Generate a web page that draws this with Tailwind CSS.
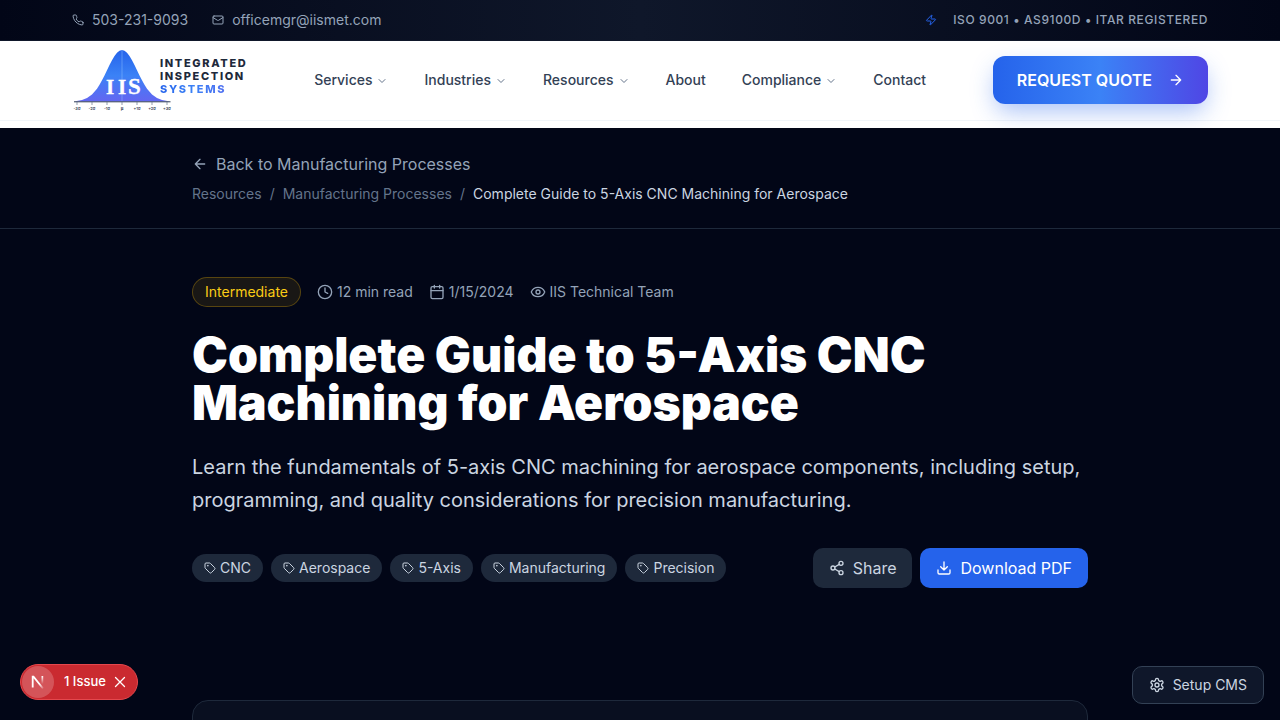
<!DOCTYPE html>
<html lang="en">
<head>
<meta charset="utf-8">
<meta name="viewport" content="width=device-width, initial-scale=1">
<title>Complete Guide to 5-Axis CNC Machining for Aerospace</title>
<script src="https://cdn.jsdelivr.net/npm/@tailwindcss/browser@4"></script>
</head>
<body class="h-screen overflow-hidden bg-white font-['Inter',sans-serif] antialiased">
<svg class="hidden" aria-hidden="true">
  <defs>
    <symbol id="chevron" viewBox="0 0 24 24"><path d="m6 9 6 6 6-6"/></symbol>
    <symbol id="tag" viewBox="0 0 24 24"><path d="M12.586 2.586A2 2 0 0 0 11.172 2H4a2 2 0 0 0-2 2v7.172a2 2 0 0 0 .586 1.414l8.704 8.704a2.426 2.426 0 0 0 3.420 0l6.580-6.580a2.426 2.426 0 0 0 0-3.420z"/><circle cx="7.5" cy="7.5" r=".5" fill="currentColor"/></symbol>
  </defs>
</svg>

<header class="relative z-10">
  <div class="border-b border-[#0f172a] bg-[linear-gradient(to_right,#020617,#0f172a,#020617)]">
    <div class="mx-auto flex h-10 items-center justify-between px-18">
      <div class="flex items-center gap-6 text-sm text-[#94a3b8]">
        <a href="tel:5032319093" class="flex items-center gap-2">
          <svg class="size-3" viewBox="0 0 24 24" fill="none" stroke="currentColor" stroke-width="2" stroke-linecap="round" stroke-linejoin="round"><path d="M22 16.92v3a2 2 0 0 1-2.18 2 19.79 19.79 0 0 1-8.63-3.07 19.5 19.5 0 0 1-6-6 19.79 19.79 0 0 1-3.07-8.67A2 2 0 0 1 4.11 2h3a2 2 0 0 1 2 1.72 12.84 12.84 0 0 0 .7 2.81 2 2 0 0 1-.45 2.11L8.09 9.91a16 16 0 0 0 6 6l1.27-1.27a2 2 0 0 1 2.11-.45 12.84 12.84 0 0 0 2.81.7A2 2 0 0 1 22 16.92z"/></svg>
          503-231-9093
        </a>
        <a href="mailto:officemgr@iismet.com" class="flex items-center gap-2">
          <svg class="size-3" viewBox="0 0 24 24" fill="none" stroke="currentColor" stroke-width="2" stroke-linecap="round" stroke-linejoin="round"><rect width="20" height="16" x="2" y="4" rx="2"/><path d="m22 7-8.97 5.7a1.94 1.94 0 0 1-2.06 0L2 7"/></svg>
          officemgr@iismet.com
        </a>
      </div>
      <div class="flex items-center gap-4 text-xs font-medium tracking-wider text-[#94a3b8]">
        <svg class="size-3 text-[#2563eb]" viewBox="0 0 24 24" fill="none" stroke="currentColor" stroke-width="2" stroke-linecap="round" stroke-linejoin="round"><path d="M4 14a1 1 0 0 1-.78-1.63l9.9-10.2a.5.5 0 0 1 .86.46l-1.92 6.02A1 1 0 0 0 13 10h7a1 1 0 0 1 .78 1.63l-9.9 10.2a.5.5 0 0 1-.86-.46l1.92-6.02A1 1 0 0 0 11 14z"/></svg>
        <span>ISO 9001 • AS9100D • ITAR REGISTERED</span>
      </div>
    </div>
  </div>

  <div class="border-b border-[#f1f5f9] bg-white">
    <div class="flex h-[79px] items-center justify-between px-18 pb-px">
      <a href="#" class="flex items-center" aria-label="Integrated Inspection Systems">
        <svg class="h-16 w-[100px]" viewBox="0 0 100 64">
          <defs>
            <linearGradient id="bell" x1="0" y1="0" x2="0" y2="1"><stop offset="0" stop-color="#2563eb"/><stop offset=".5" stop-color="#3b82f6"/><stop offset="1" stop-color="#6366f1"/></linearGradient>
          </defs>
          <path fill="url(#bell)" d="M2 53.500L10 52L15 50.100L20 46.500L25 40.700L27.500 36.800L30 32.300L32.500 27.400L35 22.300L37.500 17.100L40 12.300L42.500 8.100L45 4.800Q47.500 2 50 2Q52.500 2 55 4.800L57.500 8.100L60 12.300L62.500 17.100L65 22.300L67.500 27.400L70 32.300L72.500 36.800L75 40.700L80 46.500L85 50.100L90 52L98 53.500Z"/>
          <path d="M50 2V53" stroke="#93c5fd" stroke-opacity=".45" stroke-width="1"/>
          <path d="M2 53.800H98.500" stroke="#334155" stroke-width="1"/>
          <path d="M5 54v3M20 54v3M35 54v3M50 54v3M65 54v3M80 54v3M95 54v3" stroke="#64748b" stroke-width=".7"/>
          <g font-family="Liberation Serif, serif" font-weight="700" font-size="21" fill="#fff" stroke="#fff" stroke-width=".3"><text x="34" y="46">I</text><text x="46" y="46">I</text><text x="56" y="46" font-size="23">S</text></g>
          <g font-family="Inter, sans-serif" font-weight="600" font-size="4" fill="#334155" text-anchor="middle"><text x="5" y="62">-3σ</text><text x="20" y="62">-2σ</text><text x="35" y="62">-1σ</text><text x="50" y="62" font-weight="800">μ</text><text x="65" y="62">+1σ</text><text x="80" y="62">+2σ</text><text x="95" y="62">+3σ</text></g>
        </svg>
        <span class="-ml-3 flex flex-col items-start pb-2 text-[11px]/[13px] font-extrabold tracking-[0.15em] text-[#1e293b]">
          <span>INTEGRATED</span><span>INSPECTION</span><span class="bg-[linear-gradient(to_right,#2563eb,#3b82f6,#4f6ef0)] bg-clip-text text-transparent">SYSTEMS</span>
        </span>
      </a>
      <nav class="flex items-center gap-9 text-sm font-medium text-[#334155]">
        <a href="#" class="flex items-center gap-1">Services<svg class="mt-px size-3 text-[#64748b]" fill="none" stroke="currentColor" stroke-width="2" stroke-linecap="round" stroke-linejoin="round"><use href="#chevron"/></svg></a>
        <a href="#" class="flex items-center gap-1">Industries<svg class="mt-px size-3 text-[#64748b]" fill="none" stroke="currentColor" stroke-width="2" stroke-linecap="round" stroke-linejoin="round"><use href="#chevron"/></svg></a>
        <a href="#" class="flex items-center gap-1">Resources<svg class="mt-px size-3 text-[#64748b]" fill="none" stroke="currentColor" stroke-width="2" stroke-linecap="round" stroke-linejoin="round"><use href="#chevron"/></svg></a>
        <a href="#">About</a>
        <a href="#" class="flex items-center gap-1">Compliance<svg class="mt-px size-3 text-[#64748b]" fill="none" stroke="currentColor" stroke-width="2" stroke-linecap="round" stroke-linejoin="round"><use href="#chevron"/></svg></a>
        <a href="#">Contact</a>
      </nav>
      <a href="#" class="flex h-12 items-center gap-4 rounded-xl bg-[linear-gradient(to_right,#2563eb,#3b82f6,#4f46e5)] px-6 font-semibold text-white shadow-[0_10px_25px_-3px_rgba(37,99,235,0.4)]">
        REQUEST QUOTE
        <svg class="size-4" viewBox="0 0 24 24" fill="none" stroke="currentColor" stroke-width="2" stroke-linecap="round" stroke-linejoin="round"><path d="M5 12h14M12 5l7 7-7 7"/></svg>
      </a>
    </div>
  </div>
</header>

<main class="relative z-20 mt-[7px] bg-[#020617] text-[#94a3b8]">
  <div class="border-b border-[#1e293b] py-6">
    <div class="mx-auto max-w-4xl">
      <a href="#" class="flex items-center gap-2">
        <svg class="size-4" viewBox="0 0 24 24" fill="none" stroke="currentColor" stroke-width="2" stroke-linecap="round" stroke-linejoin="round"><path d="m12 19-7-7 7-7M19 12H5"/></svg>
        Back to Manufacturing Processes
      </a>
      <nav class="mt-2 flex gap-2 text-sm text-[#64748b]" aria-label="Breadcrumb">
        <a href="#">Resources</a><span>/</span><a href="#">Manufacturing Processes</a><span>/</span><span class="text-[#cbd5e1]">Complete Guide to 5-Axis CNC Machining for Aerospace</span>
      </nav>
    </div>
  </div>

  <section class="mx-auto max-w-4xl py-12">
    <div class="flex items-center gap-4 text-sm">
      <span class="rounded-full border border-[#eab308]/30 bg-[#eab308]/10 px-3 py-1 text-[#facc15]">Intermediate</span>
      <span class="flex items-center gap-1"><svg class="size-4" viewBox="0 0 24 24" fill="none" stroke="currentColor" stroke-width="2" stroke-linecap="round" stroke-linejoin="round"><circle cx="12" cy="12" r="10"/><path d="M12 6v6l4 2"/></svg>12 min read</span>
      <span class="flex items-center gap-1"><svg class="size-4" viewBox="0 0 24 24" fill="none" stroke="currentColor" stroke-width="2" stroke-linecap="round" stroke-linejoin="round"><path d="M8 2v4M16 2v4M3 10h18"/><rect width="18" height="18" x="3" y="4" rx="2"/></svg>1/15/2024</span>
      <span class="flex items-center gap-1"><svg class="size-4" viewBox="0 0 24 24" fill="none" stroke="currentColor" stroke-width="2" stroke-linecap="round" stroke-linejoin="round"><path d="M2.062 12.348a1 1 0 0 1 0-.696 10.750 10.750 0 0 1 19.876 0 1 1 0 0 1 0 .696 10.750 10.750 0 0 1-19.876 0"/><circle cx="12" cy="12" r="3"/></svg>IIS Technical Team</span>
    </div>
    <h1 class="mt-6 text-5xl font-black text-white">Complete Guide to 5-Axis CNC Machining for Aerospace</h1>
    <p class="mt-6 text-xl leading-relaxed text-[#cbd5e1]">Learn the fundamentals of 5-axis CNC machining for aerospace components, including setup, programming, and quality considerations for precision manufacturing.</p>
    <div class="mt-8 flex items-center justify-between text-[#cbd5e1]">
      <ul class="flex gap-2 text-sm">
        <li class="flex items-center gap-1 rounded-full bg-[#1e293b] px-3 py-1"><svg class="size-3" fill="none" stroke="currentColor" stroke-width="2" stroke-linecap="round" stroke-linejoin="round"><use href="#tag"/></svg>CNC</li>
        <li class="flex items-center gap-1 rounded-full bg-[#1e293b] px-3 py-1"><svg class="size-3" fill="none" stroke="currentColor" stroke-width="2" stroke-linecap="round" stroke-linejoin="round"><use href="#tag"/></svg>Aerospace</li>
        <li class="flex items-center gap-1 rounded-full bg-[#1e293b] px-3 py-1"><svg class="size-3" fill="none" stroke="currentColor" stroke-width="2" stroke-linecap="round" stroke-linejoin="round"><use href="#tag"/></svg>5-Axis</li>
        <li class="flex items-center gap-1 rounded-full bg-[#1e293b] px-3 py-1"><svg class="size-3" fill="none" stroke="currentColor" stroke-width="2" stroke-linecap="round" stroke-linejoin="round"><use href="#tag"/></svg>Manufacturing</li>
        <li class="flex items-center gap-1 rounded-full bg-[#1e293b] px-3 py-1"><svg class="size-3" fill="none" stroke="currentColor" stroke-width="2" stroke-linecap="round" stroke-linejoin="round"><use href="#tag"/></svg>Precision</li>
      </ul>
      <div class="flex gap-2">
        <button type="button" class="flex items-center gap-2 rounded-[10px] bg-[#1e293b] px-4 py-2"><svg class="size-4" viewBox="0 0 24 24" fill="none" stroke="currentColor" stroke-width="2" stroke-linecap="round" stroke-linejoin="round"><circle cx="18" cy="5" r="3"/><circle cx="6" cy="12" r="3"/><circle cx="18" cy="19" r="3"/><path d="m8.590 13.510 6.830 3.980M15.410 6.510l-6.820 3.980"/></svg>Share</button>
        <button type="button" class="flex items-center gap-2 rounded-[10px] bg-[#2563eb] px-4 py-2 text-white"><svg class="size-4" viewBox="0 0 24 24" fill="none" stroke="currentColor" stroke-width="2" stroke-linecap="round" stroke-linejoin="round"><path d="M21 15v4a2 2 0 0 1-2 2H5a2 2 0 0 1-2-2v-4M7 10l5 5 5-5M12 15V3"/></svg>Download PDF</button>
      </div>
    </div>
  </section>

  <section class="mx-auto max-w-4xl py-16">
    <div class="h-96 rounded-2xl border border-[#1e293b] bg-[#0f172a]/50"></div>
  </section>
</main>

<div class="fixed bottom-5 left-5 z-30 flex h-9 items-center rounded-full border border-[#e5484d] bg-[#ca2a30] pr-[11px] pl-px text-[13px] font-medium text-white">
  <span class="flex size-8 items-center justify-center rounded-full bg-white/20">
    <svg class="size-4" viewBox="0 0 16 16" fill="none"><defs><linearGradient id="stem" x1="0" y1="0" x2="0" y2="1"><stop offset="0" stop-color="#fff"/><stop offset="1" stop-color="#fff" stop-opacity="0"/></linearGradient><linearGradient id="slash" x1="3" y1="2" x2="14" y2="15" gradientUnits="userSpaceOnUse"><stop offset=".6" stop-color="#fff"/><stop offset="1" stop-color="#fff" stop-opacity="0"/></linearGradient></defs><path d="M2.700 13.500V2.700H3.500L13 14.500" stroke="url(#slash)" stroke-width="1.800"/><rect x="11.500" y="2" width="1.700" height="8" fill="url(#stem)"/></svg>
  </span>
  <button type="button" class="ml-[10px]">1 Issue</button>
  <button type="button" class="ml-2" aria-label="Close"><svg class="size-3" viewBox="0 0 12 12" fill="none" stroke="currentColor" stroke-width="1.300" stroke-linecap="round"><path d="m1.500 1.500 9 9M10.500 1.500l-9 9"/></svg></button>
</div>

<button type="button" class="fixed right-4 bottom-4 z-30 flex items-center gap-2 rounded-[10px] border border-[#334155] bg-[#0f172a] px-4 py-2 text-sm text-[#cbd5e1]">
  <svg class="size-4" viewBox="0 0 24 24" fill="none" stroke="currentColor" stroke-width="2" stroke-linecap="round" stroke-linejoin="round"><path d="M12.220 2h-.440a2 2 0 0 0-2 2v.180a2 2 0 0 1-1 1.730l-.430.250a2 2 0 0 1-2 0l-.150-.080a2 2 0 0 0-2.730.730l-.220.380a2 2 0 0 0 .730 2.730l.150.100a2 2 0 0 1 1 1.720v.510a2 2 0 0 1-1 1.740l-.150.090a2 2 0 0 0-.730 2.730l.220.380a2 2 0 0 0 2.730.730l.150-.080a2 2 0 0 1 2 0l.430.250a2 2 0 0 1 1 1.730V20a2 2 0 0 0 2 2h.440a2 2 0 0 0 2-2v-.180a2 2 0 0 1 1-1.730l.430-.250a2 2 0 0 1 2 0l.150.080a2 2 0 0 0 2.730-.730l.220-.390a2 2 0 0 0-.730-2.730l-.150-.080a2 2 0 0 1-1-1.740v-.500a2 2 0 0 1 1-1.740l.150-.090a2 2 0 0 0 .730-2.730l-.220-.380a2 2 0 0 0-2.730-.730l-.150.080a2 2 0 0 1-2 0l-.430-.250a2 2 0 0 1-1-1.730V4a2 2 0 0 0-2-2z"/><circle cx="12" cy="12" r="3"/></svg>
  Setup CMS
</button>
</body>
</html>
